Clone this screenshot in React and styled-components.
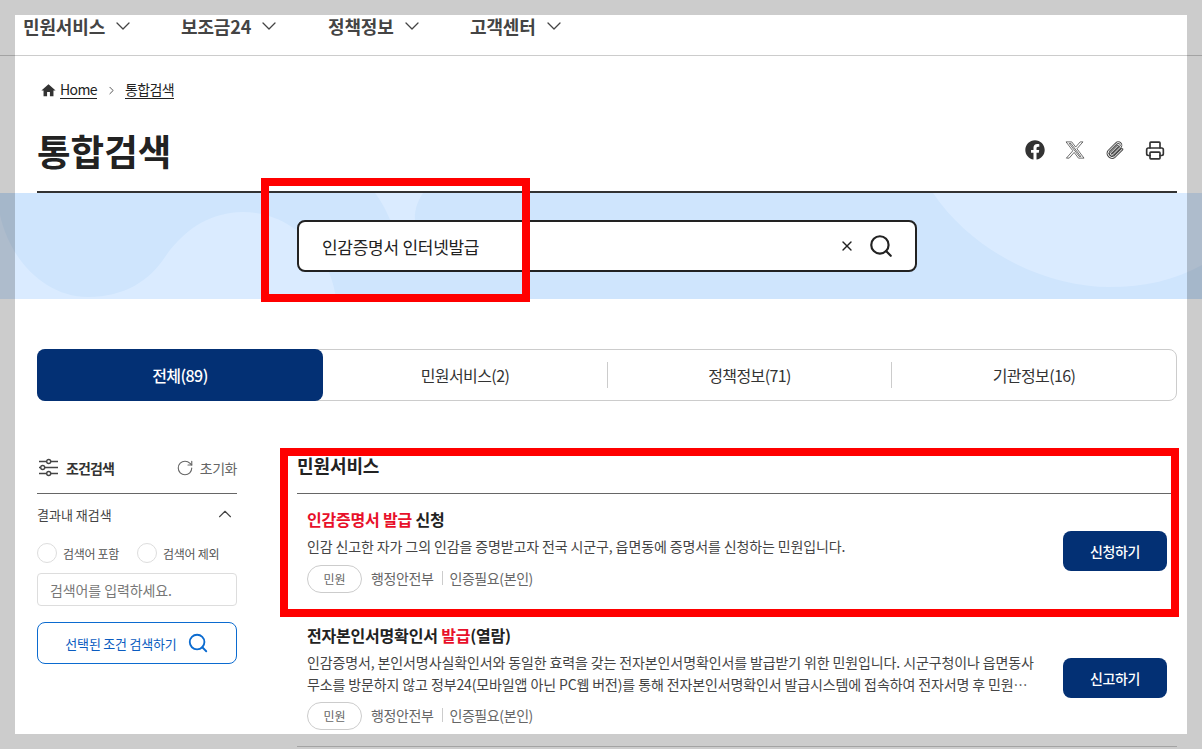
import React from "react";
import styled, { createGlobalStyle } from "styled-components";
import { ChevronDown, ChevronUp, ChevronRight, Search, X, Printer, RotateCw } from "lucide-react";
import { FaFacebook } from "react-icons/fa";
import { MdHome } from "react-icons/md";

const Global = createGlobalStyle`
  html, body { margin: 0; padding: 0; height: 749px; overflow: hidden; background: #fff; }
  body { font-family: "Noto Sans CJK KR", "Noto Sans", sans-serif; color: #222; }
  * { box-sizing: border-box; }
`;

const NAVY = "#033074";

const Page = styled.div`
  position: relative;
  width: 1202px;
  height: 749px;
  overflow: hidden;
`;
const Nav = styled.nav`
  height: 56px;
  border-bottom: 1px solid #ccc;
  display: flex;
  padding: 13px 0 0 23px;
`;
const NavItem = styled.div`
  width: ${(p) => p.$w}px;
  height: 26px;
  display: flex;
  align-items: center;
  gap: 6px;
  font-size: 18px;
  font-weight: 700;
  line-height: 26px;
  letter-spacing: -0.15px;
  color: #444;
`;
const Content = styled.div`
  padding: 0 25px 0 37px;
`;
const Crumbs = styled.div`
  height: 24px;
  margin-top: 22px;
  display: flex;
  align-items: center;
  font-size: 14px;
  letter-spacing: -0.6px;
  color: #222;
  padding-left: 5px;
`;
const CrumbLink = styled.span`
  border-bottom: 1px solid #222;
  line-height: 17px;
`;
const CrumbSep = styled.span`
  display: flex;
  width: 28px;
  justify-content: center;
  color: #222;
`;
const TitleRow = styled.div`
  height: 79px;
  margin-top: 12px;
  border-bottom: 2px solid #333;
  display: flex;
  justify-content: space-between;
  align-items: flex-start;
`;
const Title = styled.h1`
  margin: 12px 0 0;
  font-size: 36.5px;
  font-weight: 700;
  line-height: 50px;
  color: #222;
  letter-spacing: 0;
`;
const Share = styled.div`
  display: flex;
  gap: 20px;
  margin: 26px 12px 0 0;
  color: #333;
`;
const ShareIcon = styled.span`
  width: 20px;
  height: 20px;
  display: flex;
  align-items: center;
  justify-content: center;
`;
const Band = styled.section`
  position: relative;
  height: 106px;
  background: #cfe5fd;
  padding: 27px 0 0 297px;
`;
const BandArt = styled.svg`
  position: absolute;
  inset: 0;
  width: 1202px;
  height: 106px;
`;
const SearchBox = styled.div`
  position: relative;
  width: 620px;
  height: 52px;
  background: #fff;
  border: 2px solid #222;
  border-radius: 8px;
  display: flex;
  align-items: center;
  padding: 0 21px 0 23px;
`;
const SearchText = styled.div`
  flex: 1;
  font-size: 17px;
  letter-spacing: -0.27px;
  color: #222;
`;
const ClearBtn = styled.span`
  display: flex;
  margin-right: 13px;
  color: #222;
`;
const SearchBtn = styled.span`
  display: flex;
  color: #222;
`;
const Tabs = styled.div`
  margin-top: 50px;
  height: 52px;
  border: 1px solid #ccc;
  border-radius: 8px;
  display: grid;
  grid-template-columns: 285px 284px 284px 1fr;
  align-items: center;
  background: #fff;
`;
const Tab = styled.div`
  position: relative;
  height: ${(p) => (p.$active ? "52px" : "26px")};
  margin: ${(p) => (p.$active ? "-1px 0 -1px -1px" : "0")};
  border-radius: ${(p) => (p.$active ? "8px" : "0")};
  border-left: ${(p) => (p.$sep ? "1px solid #ccc" : "none")};
  background: ${(p) => (p.$active ? NAVY : "transparent")};
  color: ${(p) => (p.$active ? "#fff" : "#333")};
  font-weight: ${(p) => (p.$active ? 500 : 400)};
  display: flex;
  align-items: center;
  justify-content: center;
  font-size: 16px;
  letter-spacing: -0.6px;
`;
const Columns = styled.div`
  display: grid;
  grid-template-columns: 200px 880px;
  column-gap: 60px;
  margin-top: 48px;
`;
const SideHead = styled.div`
  height: 45px;
  border-bottom: 1px solid #666;
  display: flex;
  align-items: center;
  padding: 0 0 7px 2px;
`;
const SideTitle = styled.div`
  flex: 1;
  margin-left: 8px;
  font-size: 14px;
  font-weight: 700;
  letter-spacing: -0.9px;
  color: #333;
`;
const Reset = styled.div`
  display: flex;
  align-items: center;
  gap: 6px;
  font-size: 14px;
  letter-spacing: -0.5px;
  color: #666;
`;
const Accordion = styled.div`
  height: 40px;
  display: flex;
  align-items: center;
  justify-content: space-between;
  padding-right: 1px;
  font-size: 13px;
  letter-spacing: 0;
  color: #444;
`;
const RadioRow = styled.div`
  display: flex;
  height: 22px;
  margin-top: 8px;
  gap: 18px;
`;
const RadioLabel = styled.label`
  display: flex;
  align-items: center;
  gap: 6px;
  font-size: 12px;
  letter-spacing: -0.3px;
  color: #555;
`;
const RadioDot = styled.span`
  width: 20px;
  height: 20px;
  border-radius: 50%;
  border: 1px solid #ddd;
  background: #fff;
`;
const TextField = styled.div`
  margin-top: 9px;
  height: 33px;
  border: 1px solid #ddd;
  border-radius: 4px;
  padding: 0 12px;
  display: flex;
  align-items: center;
  font-size: 14px;
  color: #777;
  letter-spacing: -0.1px;
`;
const FilterBtn = styled.div`
  margin-top: 16px;
  height: 42px;
  border: 1px solid #0b6bd0;
  border-radius: 8px;
  display: flex;
  align-items: center;
  justify-content: center;
  gap: 10px;
  font-size: 13px;
  letter-spacing: -0.2px;
  color: #0b5cc0;
`;
const SectionHead = styled.h2`
  margin: 0;
  height: 45px;
  border-bottom: 1px solid #666;
  font-size: 18px;
  font-weight: 700;
  line-height: 26px;
  color: #222;
  letter-spacing: -0.1px;
  padding-top: 3px;
`;
const Item = styled.article`
  display: flex;
  align-items: flex-start;
  padding: ${(p) => p.$pad};
  border-bottom: ${(p) => (p.$last ? "1px solid #ccc" : "none")};
`;
const ItemBody = styled.div`
  flex: 1;
  min-width: 0;
`;
const ItemTitle = styled.h3`
  margin: 0;
  font-size: 16px;
  line-height: 24px;
  font-weight: 700;
  letter-spacing: -0.2px;
  color: #222;
`;
const Hit = styled.span`
  color: #e8102a;
`;
const Desc = styled.p`
  margin: 4px 0 0;
  width: 731px;
  font-size: 14px;
  line-height: 22px;
  letter-spacing: -0.12px;
  color: #444;
  word-break: break-all;
  display: -webkit-box;
  -webkit-box-orient: vertical;
  -webkit-line-clamp: 2;
  overflow: hidden;
`;
const Meta = styled.div`
  margin-top: ${(p) => p.$gap}px;
  display: flex;
  align-items: center;
`;
const MetaInfo = styled.div`
  display: flex;
  align-items: center;
  height: 20px;
  margin-bottom: 3px;
  font-size: 14px;
  line-height: 20px;
  letter-spacing: -0.4px;
  color: #666;
`;
const Pill = styled.span`
  width: 55px;
  height: 28px;
  border: 1px solid #ccc;
  border-radius: 14px;
  display: flex;
  align-items: center;
  justify-content: center;
  font-size: 12px;
  line-height: 18px;
  color: #666;
  margin-right: 9px;
`;
const MetaSep = styled.span`
  width: 1px;
  height: 14px;
  background: #ccc;
  margin: 0 6px 0 9px;
`;
const ActionBtn = styled.div`
  width: 104px;
  height: 40px;
  border-radius: 8px;
  background: ${NAVY};
  color: #fff;
  font-size: 14px;
  font-weight: 500;
  letter-spacing: -0.4px;
  display: flex;
  align-items: center;
  justify-content: center;
  margin: ${(p) => p.$m};
`;
const Frame = styled.div`
  position: absolute;
  inset: 0;
  border: 15px solid rgba(0, 0, 0, 0.2);
  pointer-events: none;
`;
const Callout = styled.div`
  position: absolute;
  left: ${(p) => p.$x}px;
  top: ${(p) => p.$y}px;
  width: ${(p) => p.$w}px;
  height: ${(p) => p.$h}px;
  border: 8px solid #ff0000;
  pointer-events: none;
`;

const CLIP = "M20.5 10.5 11.6 19.4a5 5 0 0 1-7-7l9-9a3.3 3.3 0 0 1 4.7 4.7l-9 9a1.6 1.6 0 0 1-2.3-2.3l8.3-8.3";
const Clip = () => (
  <svg width="21" height="21" viewBox="0 0 24 24" fill="none" strokeLinecap="round" strokeLinejoin="round">
    <path d={CLIP} stroke="#444" strokeWidth="3" />
    <path d={CLIP} stroke="#fff" strokeWidth="1.2" />
  </svg>
);

const XLogo = () => (
  <svg width="20" height="20" viewBox="0 0 512 512" fill="#fff" stroke="#333" strokeWidth="18" strokeLinejoin="miter">
    <path d="M389.2 48h70.6L305.6 224.2 487 464H345L233.7 318.6 106.5 464H35.8L200.7 275.5 26.8 48H172.4L272.9 180.9 389.2 48zM364.4 421.8h39.1L151.1 88h-42L364.4 421.8z" />
  </svg>
);

const Sliders = () => (
  <svg width="19" height="19" viewBox="0 0 19 19" fill="none" stroke="#444" strokeWidth="1.4">
    <path d="M0 3.5h7.5M12 3.5h7M0 9.5h1.5M6 9.5h13M0 15.5h7.5M12 15.5h7" />
    <circle cx="9.7" cy="3.5" r="2" />
    <circle cx="3.7" cy="9.5" r="2" />
    <circle cx="9.7" cy="15.5" r="2" />
  </svg>
);

const MetaLine = ({ gap }) => (
  <Meta $gap={gap}>
    <Pill>민원</Pill>
    <MetaInfo>
      행정안전부
      <MetaSep />
      인증필요(본인)
    </MetaInfo>
  </Meta>
);

const Chevron = () => <ChevronDown size={24} strokeWidth={1.3} />;

export default function App() {
  return (
    <Page>
      <Global />
      <Nav>
        <NavItem $w={158}>민원서비스<Chevron /></NavItem>
        <NavItem $w={147}>보조금24<Chevron /></NavItem>
        <NavItem $w={142}>정책정보<Chevron /></NavItem>
        <NavItem $w={142}>고객센터<Chevron /></NavItem>
      </Nav>
      <Content>
        <Crumbs>
          <MdHome size={17} color="#333" style={{ marginLeft: -2, marginRight: 3 }} />
          <CrumbLink>Home</CrumbLink>
          <CrumbSep><ChevronRight size={13} strokeWidth={1.4} /></CrumbSep>
          <CrumbLink>통합검색</CrumbLink>
        </Crumbs>
        <TitleRow>
          <Title>통합검색</Title>
          <Share>
            <ShareIcon><FaFacebook size={20} /></ShareIcon>
            <ShareIcon><XLogo /></ShareIcon>
            <ShareIcon><Clip /></ShareIcon>
            <ShareIcon><Printer size={21} strokeWidth={2} /></ShareIcon>
          </Share>
        </TitleRow>
      </Content>
      <Band>
        <BandArt viewBox="0 0 1202 106">
          <path fill="#daebff" d="M0 22C10 67 45 104 88 104C125 104 150 87 165 64C185 35 212 19 243 19C290 19 330 57 336 106L0 106Z" />
          <path fill="#daebff" d="M375 0L423 0C415 12 412 25 418 40L395 40C390 25 384 12 375 0Z" />
          <path fill="#daebff" d="M933 0C975 62 1050 94 1109 94C1145 94 1175 87 1202 72L1202 0Z" />
        </BandArt>
        <SearchBox>
          <SearchText>인감증명서 인터넷발급</SearchText>
          <ClearBtn><X size={16} strokeWidth={2} /></ClearBtn>
          <SearchBtn><Search size={26} strokeWidth={2} /></SearchBtn>
        </SearchBox>
      </Band>
      <Content>
        <Tabs>
          <Tab $active>전체(89)</Tab>
          <Tab>민원서비스(2)</Tab>
          <Tab $sep>정책정보(71)</Tab>
          <Tab $sep>기관정보(16)</Tab>
        </Tabs>
        <Columns>
          <aside>
            <SideHead>
              <Sliders />
              <SideTitle>조건검색</SideTitle>
              <Reset><RotateCw size={18} strokeWidth={1.5} />초기화</Reset>
            </SideHead>
            <Accordion>결과내 재검색<ChevronUp size={22} strokeWidth={1.2} /></Accordion>
            <RadioRow>
              <RadioLabel><RadioDot />검색어 포함</RadioLabel>
              <RadioLabel><RadioDot />검색어 제외</RadioLabel>
            </RadioRow>
            <TextField>검색어를 입력하세요.</TextField>
            <FilterBtn>선택된 조건 검색하기<Search size={22} strokeWidth={2} color="#0b6bd0" /></FilterBtn>
          </aside>
          <main>
            <SectionHead>민원서비스</SectionHead>
            <Item $pad="13px 10px 20px">
              <ItemBody>
                <ItemTitle><Hit>인감증명서 발급</Hit> 신청</ItemTitle>
                <Desc>인감 신고한 자가 그의 인감을 증명받고자 전국 시군구, 읍면동에 증명서를 신청하는 민원입니다.</Desc>
                <MetaLine gap={8} />
              </ItemBody>
              <ActionBtn $m="24px 0 0 0">신청하기</ActionBtn>
            </Item>
            <Item $pad="10px 10px 16px" $last>
              <ItemBody>
                <ItemTitle>전자본인서명확인서 <Hit>발급</Hit>(열람)</ItemTitle>
                <Desc>인감증명서, 본인서명사실확인서와 동일한 효력을 갖는 전자본인서명확인서를 발급받기 위한 민원입니다. 시군구청이나 읍면동사무소를 방문하지 않고 정부24(모바일앱 아닌 PC웹 버전)를 통해 전자본인서명확인서 발급시스템에 접속하여 전자서명 후 민원서비스를 이용하실 수 있습니다.</Desc>
                <MetaLine gap={7} />
              </ItemBody>
              <ActionBtn $m="35px 0 0 0">신고하기</ActionBtn>
            </Item>
          </main>
        </Columns>
      </Content>
      <Frame />
      <Callout $x={261} $y={178} $w={269} $h={124} />
      <Callout $x={280} $y={448} $w={899} $h={169} />
    </Page>
  );
}
